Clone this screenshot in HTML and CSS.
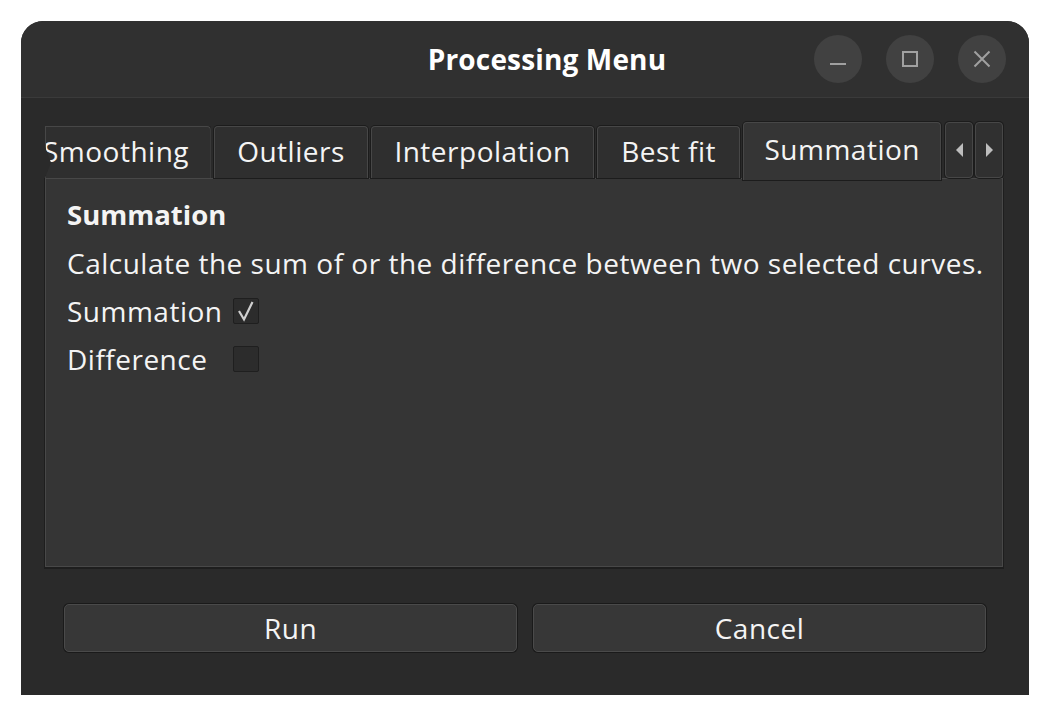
FILE: index.html
```html
<!DOCTYPE html>
<html>
<head>
<meta charset="utf-8">
<link rel="stylesheet" href="styles.css">
</head>
<body>
<div class="window">
  <header class="titlebar">
    <div class="title">Processing Menu</div>
    <div class="controls">
      <span class="wbtn"><svg width="20" height="20" viewBox="0 0 20 20"><path d="M2 15H18" stroke="#a0a0a0" stroke-width="2"/></svg></span>
      <span class="wbtn"><svg width="20" height="20" viewBox="0 0 20 20"><rect x="3" y="3" width="14" height="14" fill="none" stroke="#a0a0a0" stroke-width="2"/></svg></span>
      <span class="wbtn"><svg width="20" height="20" viewBox="0 0 20 20"><path d="M2.5 2.5L17.5 17.5M17.5 2.5L2.5 17.5" stroke="#a0a0a0" stroke-width="2"/></svg></span>
    </div>
  </header>
  <main class="content">
    <div class="tabbar">
      <div class="tab tab-first"><span class="tab-label clipped">Smoothing</span></div>
      <div class="tab"><span class="tab-label">Outliers</span></div>
      <div class="tab"><span class="tab-label">Interpolation</span></div>
      <div class="tab"><span class="tab-label">Best fit</span></div>
      <div class="tab active"><span class="tab-label">Summation</span></div>
      <div class="scroll-btns">
        <span class="sbtn"><svg width="9" height="14" viewBox="0 0 9 14"><path d="M8 0V14L1 7Z" fill="#bdbdbd"/></svg></span>
        <span class="sbtn"><svg width="9" height="14" viewBox="0 0 9 14"><path d="M1 0V14L8 7Z" fill="#bdbdbd"/></svg></span>
      </div>
    </div>
    <section class="panel">
      <div class="heading">Summation</div>
      <div class="desc">Calculate the sum of or the difference between two selected curves.</div>
      <div class="options">
        <span class="opt-label">Summation</span>
        <span class="checkbox checked"><svg width="20" height="22" viewBox="0 0 20 22"><path d="M3 11L8 19.5L16.5 2" fill="none" stroke="#cfcfcf" stroke-width="2.2"/></svg></span>
        <span class="opt-label">Difference</span>
        <span class="checkbox"></span>
      </div>
    </section>
    <div class="actions">
      <button class="btn">Run</button>
      <button class="btn">Cancel</button>
    </div>
  </main>
</div>
</body>
</html>
```

FILE: styles.css
```css
* { box-sizing: border-box; }
html, body { margin: 0; padding: 0; background: #ffffff; }
body {
  font-family: "Open Sans", "Noto Sans", sans-serif;
  color: #f4f4f4;
  padding: 21px 21px 21px 21px;
}
.window {
  width: 1008px;
  height: 674px;
  background: #2a2a2a;
  border-radius: 22px 22px 0 0;
  overflow: hidden;
  display: flex;
  flex-direction: column;
}
.titlebar {
  height: 77px;
  flex: none;
  background: #303030;
  border-bottom: 1px solid #3a3a3a;
  display: flex;
  align-items: center;
  padding: 0 23px 0 259px;
}
.title {
  flex: 1;
  text-align: center;
  font-weight: 700;
  font-size: 28px;
  color: #ffffff;
  letter-spacing: 0.15px;
}
.controls { display: flex; gap: 24px; }
.wbtn {
  width: 48px; height: 48px;
  border-radius: 50%;
  background: #414141;
  display: flex; align-items: center; justify-content: center;
}
.content {
  flex: 1;
  padding: 24px 26px 0 24px;
  display: flex;
  flex-direction: column;
}
.tabbar {
  height: 58px;
  display: flex;
  align-items: flex-end;
  gap: 3px;
  position: relative;
  z-index: 1;
}
.tab {
  height: 52px;
  margin-bottom: 2px;
  background: #2f2f2f;
  border: 1px solid #474747;
  border-bottom: none;
  border-radius: 4px 4px 0 0;
  box-shadow: 0 0 0 1px #1c1c1c;
  display: flex;
  align-items: center;
  justify-content: center;
  font-size: 28px;
  letter-spacing: 0.5px;
  padding: 0 0 3px 0;
  overflow: hidden;
  white-space: nowrap;
}
.tab-first {
  width: 166px;
  justify-content: flex-start;
  border-radius: 0 4px 0 0;
  clip-path: polygon(0 0, 100% 0, 100% 100%, 0 100%, 6px 70%, 0 40%);
}
.clipped { margin-left: -3px; }
.tab:nth-child(2) { width: 155px; }
.tab:nth-child(3) { width: 223px; }
.tab:nth-child(4) { width: 144px; }
.tab.active {
  width: 198px;
  height: 58px;
  margin-bottom: 0;
  background: #353535;
  padding-bottom: 5px;
}
.scroll-btns {
  display: flex;
  gap: 2px;
  height: 56px;
  margin-left: 1px;
  margin-bottom: 2px;
}
.sbtn {
  width: 28px;
  background: #303030;
  border: 1px solid #474747;
  border-radius: 4px;
  box-shadow: 0 0 0 1px #1c1c1c;
  display: flex; align-items: center; justify-content: center;
}
.panel {
  height: 389px;
  margin-top: -2px;
  background: #353535;
  border: 1px solid #484848;
  box-shadow: 0 1px 0 1px #1e1e1e;
  padding: 12px 21px;
  font-size: 28px;
  letter-spacing: 0.5px;
}
.heading { font-weight: 700; font-size: 27.5px; letter-spacing: 0; height: 48px; line-height: 48px; }
.desc { height: 48px; line-height: 48px; white-space: nowrap; }
.options {
  display: grid;
  grid-template-columns: auto auto;
  justify-content: start;
  align-items: center;
  column-gap: 10px;
  grid-auto-rows: 48px;
}
.checkbox {
  width: 26px; height: 26px;
  background: #2c2c2c;
  border: 1px solid #1f1f1f;
  border-radius: 2px;
  display: flex; align-items: center; justify-content: center;
}
.actions {
  display: flex;
  gap: 16px;
  margin: 37px 17px 0 19px;
}
.btn {
  flex: 1;
  height: 48px;
  background: #373737;
  border: 1px solid #4a4a4a;
  border-radius: 5px;
  box-shadow: 0 0 0 1px #1a1a1a;
  color: #f4f4f4;
  font-family: "Open Sans", "Noto Sans", sans-serif;
  font-size: 28px;
  letter-spacing: 0.5px;
  padding: 0;
}
```
